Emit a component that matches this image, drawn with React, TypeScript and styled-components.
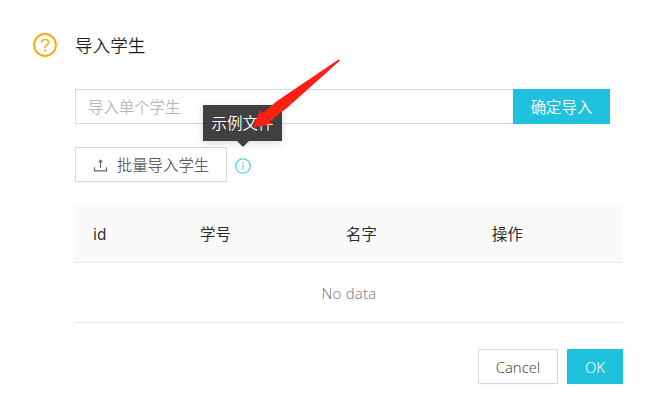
import React from 'react';
import styled, { createGlobalStyle } from 'styled-components';

const Global = createGlobalStyle`
  * { box-sizing: border-box; }
  body { margin: 0; background: #fff; font: 350 15px/24px "Noto Sans", "Noto Sans CJK SC", sans-serif; color: rgba(0,0,0,.65); }
  button, input { font: inherit; color: inherit; margin: 0; }
`;
const Modal = styled.main`
  position: relative;
  width: 657px; height: 410px;
  padding: 30px 34px 0 33px;
  display: flex; flex-direction: column;
  overflow: hidden;
`;
const Header = styled.header`
  display: flex; align-items: center; gap: 18px; height: 30px;
`;
const Title = styled.h1`
  margin: 0; font-size: 17.6px; line-height: 30px; font-weight: 350; color: rgba(0,0,0,.88);
`;
const Content = styled.section`
  margin: 29px 0 0 42px; display: flex; flex-direction: column;
`;
const ImportRow = styled.div`
  display: flex; width: 535px; height: 35px;
`;
const Input = styled.input`
  flex: 1; min-width: 0; height: 35px; padding: 1px 12px 0 12px;
  border: 1px solid #d9d9d9; border-right: 0; border-radius: 0; outline: 0;
  font-size: 15.4px; background: #fff;
  &::placeholder { color: #b8b8b8; opacity: 1; }
`;
const Button = styled.button<{ $primary?: boolean; $w: number }>`
  width: ${p => p.$w}px; height: 35px; padding: 2px 0 0; flex: none;
  display: flex; align-items: center; justify-content: center; gap: 9px;
  border: 1px solid ${p => (p.$primary ? '#20c1dd' : '#d9d9d9')};
  background: ${p => (p.$primary ? '#20c1dd' : '#fff')};
  color: ${p => (p.$primary ? '#fff' : 'rgba(0,0,0,.65)')};
  box-shadow: 0 2px 0 rgba(0,0,0,.015);
  font-size: 15.4px; white-space: nowrap;
`;
const LatinButton = styled(Button)`
  font-size: 14.8px; padding-top: 1px;
  color: ${p => (p.$primary ? '#fff' : 'rgba(0,0,0,.75)')};
`;
const BatchRow = styled.div`
  display: flex; align-items: center; gap: 8px; margin-top: 23px;
`;
const InfoAnchor = styled.span`
  position: relative; display: flex; width: 16px; height: 16px; margin-top: 2px;
`;
const Tooltip = styled.div`
  position: absolute; top: -53px; left: -32px;
  width: 79px; height: 36px; line-height: 37px; text-align: center;
  background: rgba(0,0,0,.75); color: #fff; font-size: 15.5px; white-space: nowrap;
  box-shadow: 0 2px 8px rgba(0,0,0,.15);
  &::after {
    content: ''; position: absolute; top: 100%; left: 50%; margin-left: -5.5px;
    border: 6px solid transparent; border-bottom: 0; border-top-color: #404040;
  }
`;
const Table = styled.table`
  margin-top: 23px; width: 547px; border-collapse: separate; border-spacing: 0; table-layout: fixed;
`;
const Th = styled.th<{ $w?: number }>`
  width: ${p => (p.$w ? `${p.$w}px` : 'auto')};
  height: 58px; padding: 2px 18px 0; text-align: left; background: #fafafa;
  border-bottom: 1px solid #e8e8e8; color: rgba(0,0,0,.85); font-weight: 400; font-size: 15.4px;
`;
const Empty = styled.td`
  height: 60px; padding: 0 0 0 1px; text-align: center; border-bottom: 1px solid #e8e8e8;
  color: rgba(0,0,0,.55); font-size: 14.8px; letter-spacing: .25px;
`;
const Footer = styled.footer`
  display: flex; justify-content: flex-end; gap: 9px; margin-top: 26px;
`;
const Pointer = styled.svg`
  position: absolute; left: 0; top: 0; pointer-events: none;
`;

const QuestionIcon = () => (
  <svg width="24" height="24" viewBox="0 0 24 24" fill="none" stroke="#faad14" strokeWidth="2">
    <circle cx="12" cy="12" r="10.9" />
    <path d="M8.5 9.6C8.5 7.6 10 6.5 12 6.5s3.6 1.1 3.6 3c0 1.5-.9 2.2-2 2.8-1 .5-1.6 1-1.6 2v.8" strokeWidth="1.6" />
    <path d="M12 16.6v2" />
  </svg>
);
const InfoIcon = () => (
  <svg width="16" height="16" viewBox="0 0 16 16" fill="none" stroke="#4dd5e8">
    <circle cx="8" cy="8" r="7.2" strokeWidth="1.3" />
    <path d="M8 6.8v5M8 4v1.5" strokeWidth="1.2" />
  </svg>
);
const UploadIcon = () => (
  <svg width="15" height="15" viewBox="0 0 15 15" fill="none" stroke="#666" strokeWidth="1.2">
    <path d="M1.5 9.2v3.6h12V9.2M7.5 10V3" />
    <path d="M5.1 4.2L7.5 1.2l2.4 3z" fill="#666" stroke="none" />
  </svg>
);

export default function App() {
  return (
    <>
      <Global />
      <Modal>
        <Header><QuestionIcon /><Title>导入学生</Title></Header>
        <Content>
          <ImportRow>
            <Input placeholder="导入单个学生" />
            <Button $primary $w={97}>确定导入</Button>
          </ImportRow>
          <BatchRow>
            <Button $w={152}><UploadIcon />批量导入学生</Button>
            <InfoAnchor><InfoIcon /><Tooltip>示例文件</Tooltip></InfoAnchor>
          </BatchRow>
          <Table>
            <thead><tr><Th $w={107}>id</Th><Th $w={146}>学号</Th><Th $w={146}>名字</Th><Th>操作</Th></tr></thead>
            <tbody><tr><Empty colSpan={4}>No data</Empty></tr></tbody>
          </Table>
        </Content>
        <Footer>
          <LatinButton $w={80}>Cancel</LatinButton>
          <LatinButton $primary $w={56}>OK</LatinButton>
        </Footer>
        <Pointer width="657" height="410" viewBox="0 0 657 410">
          <path d="M338.5 59.5L277 101 262 113.5 260.5 109 253 127.8 272.5 123.5 269.5 121.5 288 107 340 60.5z" fill="#ff2013" />
        </Pointer>
      </Modal>
    </>
  );
}
